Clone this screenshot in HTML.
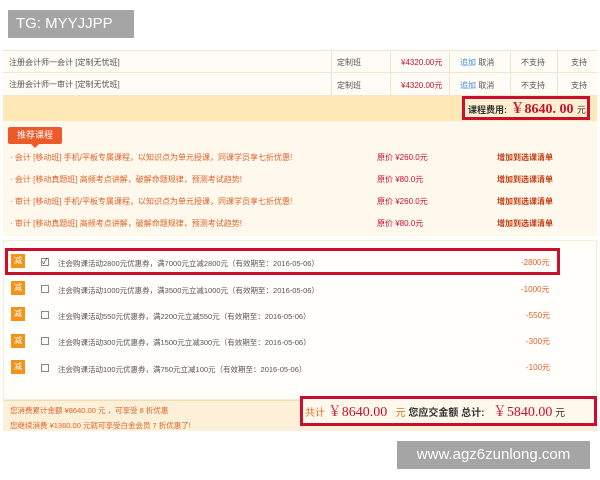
<!DOCTYPE html>
<html><head><meta charset="utf-8"><style>
*{margin:0;padding:0;box-sizing:border-box}
body{width:600px;height:480px;background:#fff;position:relative;overflow:hidden;font-family:"Liberation Sans","Noto Sans CJK SC",sans-serif;font-size:8px;color:#555}
.a{position:absolute;white-space:nowrap}
.tg{left:8px;top:10px;width:126px;height:28px;background:#a5a5a5;color:#fff;font-size:15px;line-height:28px;padding-left:8px}
.wm{left:397px;top:441px;width:193px;height:28px;background:#a5a5a5;color:#fff;font-size:15px;line-height:28px;text-align:center}
.row{left:3px;width:594px;height:23px;border-bottom:1px solid #f3e6cc;background:#fffcf5}
.sep{position:absolute;top:0;width:1px;height:23px;background:#f0e4cc}
.red{color:#c8102e}
.or{color:#e0622a}
.box{border:3px solid #c8102e}
.ck{width:8px;height:8px;border:1px solid #888;background:#fff}
.ic{width:14px;height:14px;background:#f29419;color:#fff;font-size:8px;line-height:14px;text-align:center}
</style></head><body>
<div class="a tg">TG: MYYJJPP</div>

<div class="a row" style="top:50px;border-top:1px solid #f3e6cc">
<span class="a" style="left:6px;top:6px">注册会计师一会计 [定制无忧班]</span>
</div>
<div class="a row" style="top:73px">
<span class="a" style="left:6px;top:6px">注册会计师一审计 [定制无忧班]</span>
</div>
<div class="a" style="left:3px;top:50px;width:594px;height:46px">
<div class="sep" style="left:328px;height:46px"></div><div class="sep" style="left:387px;height:46px"></div><div class="sep" style="left:446px;height:46px"></div><div class="sep" style="left:507px;height:46px"></div><div class="sep" style="left:554px;height:46px"></div>
</div>
<span class="a" style="left:337px;top:57px">定制班</span><span class="a red" style="left:401px;top:57px">¥4320.00元</span><span class="a" style="left:460px;top:57px"><span style="color:#3a8ee6">追加</span> 取消</span><span class="a" style="left:521px;top:57px">不支持</span><span class="a" style="left:571px;top:57px">支持</span>
<span class="a" style="left:337px;top:80px">定制班</span><span class="a red" style="left:401px;top:80px">¥4320.00元</span><span class="a" style="left:460px;top:80px"><span style="color:#3a8ee6">追加</span> 取消</span><span class="a" style="left:521px;top:80px">不支持</span><span class="a" style="left:571px;top:80px">支持</span>

<div class="a" style="left:3px;top:96px;width:594px;height:25px;background:#fde8b6"></div>
<div class="a box" style="left:462px;top:96px;width:128px;height:24px;background:#fdf0d0"></div>
<span class="a" style="left:468px;top:98px;font-size:9px;color:#333;font-weight:bold">课程费用:<span class="red" style="font-size:14px;font-family:'Liberation Serif','Noto Serif CJK SC',serif"> ￥8640. 00 </span><span style="font-weight:normal">元</span></span>

<div class="a" style="left:3px;top:121px;width:594px;height:115px;background:#fff8ec"></div>
<div class="a" style="left:8px;top:127px;width:54px;height:17px;background:#ec5a2a;color:#fff;font-size:9px;line-height:17px;text-align:center;border-radius:2px">推荐课程</div>
<div class="a" style="left:31px;top:144px;border:4px solid transparent;border-top-color:#ec5a2a"></div>
<span class="a or" style="left:10px;top:152px">· 会计 [移动班] 手机/平板专属课程，以知识点为单元授课，同课学员享七折优惠!</span>
<span class="a or" style="left:10px;top:174px">· 会计 [移动真题班] 高频考点讲解，破解命题规律，预测考试趋势!</span>
<span class="a or" style="left:10px;top:196px">· 审计 [移动班] 手机/平板专属课程，以知识点为单元授课，同课学员享七折优惠!</span>
<span class="a or" style="left:10px;top:218px">· 审计 [移动真题班] 高频考点讲解，破解命题规律，预测考试趋势!</span>
<span class="a red" style="left:377px;top:152px">原价 ¥260.0元</span><span class="a red" style="left:377px;top:174px">原价 ¥80.0元</span><span class="a red" style="left:377px;top:196px">原价 ¥260.0元</span><span class="a red" style="left:377px;top:218px">原价 ¥80.0元</span>
<span class="a" style="left:497px;top:152px;color:#c53a10;font-weight:bold">增加到选课清单</span><span class="a" style="left:497px;top:174px;color:#c53a10;font-weight:bold">增加到选课清单</span><span class="a" style="left:497px;top:196px;color:#c53a10;font-weight:bold">增加到选课清单</span><span class="a" style="left:497px;top:218px;color:#c53a10;font-weight:bold">增加到选课清单</span>

<div class="a" style="left:3px;top:240px;width:594px;height:160px;border:1px solid #f5ecdc;background:#fffefb"></div>
<div class="a box" style="left:5px;top:248px;width:555px;height:27px"></div>

<div class="a ic" style="left:11px;top:254px">减</div><div class="a ck" style="left:41px;top:258px;font-size:8px;line-height:6px;color:#333">✓</div><span class="a" style="left:58px;top:258px;font-size:7.5px">注会购课活动2800元优惠券，满7000元立减2800元（有效期至：2016-05-06）</span><span class="a or" style="left:521px;top:257px">-2800元</span>
<div class="a ic" style="left:11px;top:281px">减</div><div class="a ck" style="left:41px;top:285px"></div><span class="a" style="left:58px;top:285px;font-size:7.5px">注会购课活动1000元优惠券，满3500元立减1000元（有效期至：2016-05-06）</span><span class="a or" style="left:521px;top:284px">-1000元</span>
<div class="a ic" style="left:11px;top:307px">减</div><div class="a ck" style="left:41px;top:311px"></div><span class="a" style="left:58px;top:311px;font-size:7.5px">注会购课活动550元优惠券，满2200元立减550元（有效期至：2016-05-06）</span><span class="a or" style="left:526px;top:310px">-550元</span>
<div class="a ic" style="left:11px;top:334px">减</div><div class="a ck" style="left:41px;top:337px"></div><span class="a" style="left:58px;top:337px;font-size:7.5px">注会购课活动300元优惠券，满1500元立减300元（有效期至：2016-05-06）</span><span class="a or" style="left:526px;top:336px">-300元</span>
<div class="a ic" style="left:11px;top:360px">减</div><div class="a ck" style="left:41px;top:364px"></div><span class="a" style="left:58px;top:364px;font-size:7.5px">注会购课活动100元优惠券，满750元立减100元（有效期至：2016-05-06）</span><span class="a or" style="left:526px;top:362px">-100元</span>

<div class="a" style="left:3px;top:400px;width:594px;height:31px;background:#fdf0d8;border-top:1px solid #f3dcb0"></div>
<span class="a or" style="left:10px;top:405px;font-size:7.5px">您消费累计金额 ¥8640.00 元 ，可享受 8 折优惠</span>
<span class="a or" style="left:10px;top:420px;font-size:7.5px">您继续消费 ¥1360.00 元就可享受白金会员 7 折优惠了!</span>
<div class="a box" style="left:300px;top:396px;width:297px;height:30px;background:#fff8ec"></div>
<span class="a" style="left:305px;top:401px;font-size:10px;color:#e07020">共计 <span class="red" style="font-size:14px;font-family:'Liberation Serif','Noto Serif CJK SC',serif">￥8640.00</span> &nbsp; 元 <b style="color:#333">您应交金额 总计:</b> &nbsp; <span class="red" style="font-size:14px;font-family:'Liberation Serif','Noto Serif CJK SC',serif">￥5840.00</span> <span style="color:#333">元</span></span>

<div class="a wm">www.agz6zunlong.com</div>
</body></html>
